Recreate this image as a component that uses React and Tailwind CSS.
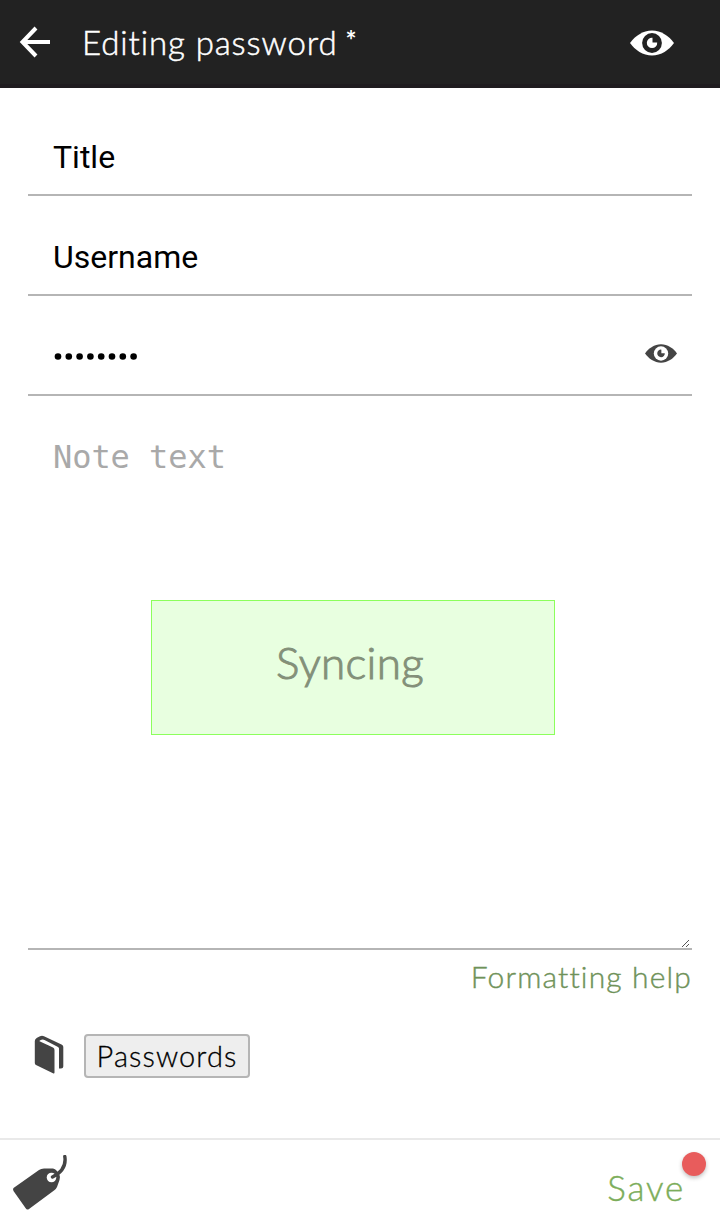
function EyeIcon({ className, hole }) {
  return (
    <svg viewBox="0 0 44 26" className={className} preserveAspectRatio="none">
      <path fill="currentColor" d="M0 13C5 6 13 .5 22 .5S39 6 44 13C39 20 31 25.500 22 25.500S5 20 0 13Z" />
      <circle cx="22" cy="13" r="9.900" fill={hole} />
      <path fill="currentColor" d="M22.500 7.700A5.200 5.200 0 1 0 27.200 12.500L22.500 12.500Z" />
    </svg>
  );
}

function Field({ children }) {
  return (
    <div className="flex h-[86px] items-center border-b-2 border-[#b5b5b5] px-[25px] pt-[10px] font-['Roboto',sans-serif] text-[32px] leading-[40px] font-normal text-black">
      {children}
    </div>
  );
}

export default function App() {
  return (
    <div className="flex h-[1232px] w-[720px] flex-col overflow-hidden bg-white font-['Lato',sans-serif] font-light">
      <header className="flex h-[88px] shrink-0 items-center border-b-4 border-[#1f1c1f] bg-[#222] text-white">
        <svg viewBox="0 0 32 32" className="ml-[19px] h-[32px] w-[32px]" fill="none" stroke="white" strokeWidth="4">
          <path d="M17 2 3.500 16 17 30M3 16H31" />
        </svg>
        <h1 className="ml-[31px] flex text-[33px] leading-[40px] tracking-[0.900px] [-webkit-text-stroke:0.500px_currentColor]">
          Editing password
          <span className="ml-[8px] text-[26px] leading-[37px] font-bold tracking-normal [-webkit-text-stroke:0px]">*</span>
        </h1>
        <EyeIcon className="mt-px mr-[46px] ml-auto h-[26px] w-[44px]" hole="#222" />
      </header>

      <main className="px-[28px] pt-[22px]">
        <div className="flex flex-col gap-[14px]">
          <Field>Title</Field>
          <Field>Username</Field>
          <Field>
            <svg viewBox="0 0 90 8" className="ml-px h-[8px] w-[90px]">
              {Array.from({ length: 8 }, (_, i) => (
                <circle key={i} cx={4 + i * 10.8} cy="3.500" r="3.300" />
              ))}
            </svg>
            <EyeIcon className="mr-[-10px] mb-[8px] ml-auto h-[19px] w-[32px] text-[#444]" hole="#fff" />
          </Field>
        </div>

        <div className="relative h-[554px] border-b-2 border-[#b5b5b5] px-[25px] pt-[41px]">
          <div className="font-['DejaVu_Sans_Mono',monospace] text-[32px] leading-[40px] font-normal tracking-[-0.060px] text-[#a9a9a9]">
            Note text
          </div>
          <div className="absolute top-[204px] left-[123px] flex h-[135px] w-[404px] justify-center border border-[#8cff5c] bg-[#e8ffe0] pt-[33px] pr-[6px] text-[44px] leading-[56px] tracking-[0.300px] text-[#839079] [-webkit-text-stroke:1px_currentColor]">
            Syncing
          </div>
          <svg viewBox="0 0 9 9" className="absolute right-[2px] bottom-0 h-[9px] w-[9px]" stroke="#555" strokeWidth="1">
            <path d="M1 8 8 1M5 8 8 5" />
          </svg>
        </div>

        <div className="flex h-[56px] items-center justify-end pb-[3px] text-[30px] tracking-[1.150px] text-[#6f9259] [-webkit-text-stroke:0.400px_currentColor]">
          Formatting help
        </div>

        <div className="mt-[28px] flex h-[44px] items-center">
          <svg viewBox="0 0 30 40" className="mb-[3px] ml-[6px] h-[40px] w-[30px]">
            <path
              fill="#444"
              d="M.8 6Q.8 4 3 2.800L6 1.200Q8 .3 10 1.200L28 9.700Q29.300 10.500 29.300 12V31.500Q29.300 33.500 27 33.500H25V13.500Q25 12.500 24 12L10.500 5Q9 4.200 7.500 4.800Q5 5.500 5.500 6.300L19 12.500Q20.500 13.300 20.500 15V37.500Q20.500 39 19 38.300L2 30Q.8 29.300 .8 28Z"
            />
          </svg>
          <div className="ml-[20px] flex h-[44px] w-[166px] items-center justify-center rounded-[4px] border-2 border-[#b5b5b5] bg-[#eee] pb-px text-[29px] tracking-[1.100px] text-black [-webkit-text-stroke:0.300px_currentColor]">
            Passwords
          </div>
        </div>
      </main>

      <footer className="mt-auto flex h-[94px] shrink-0 items-center border-t-2 border-[#e9e9e9]">
        <svg viewBox="0 0 58 60" className="mb-[2px] ml-[11px] h-[60px] w-[58px]">
          <path
            fill="#444"
            d="M2.500 33 28 15Q30 13.500 33 13.500H42Q44 13.500 46 16L48.500 20Q49.500 22 48.500 25L46 32Q45 34 43 35.500L18 54Q16 55.500 14.500 53L2.500 36Q1.500 34 2.500 33Z"
          />
          <circle cx="40.500" cy="22.500" r="4.800" fill="white" />
          <path fill="none" stroke="#444" strokeWidth="3.400" strokeLinecap="round" d="M41.500 22Q56 15 53.800 1.500" />
        </svg>
        <div className="relative mt-[1px] mr-[35px] ml-auto text-[35px] leading-[44px] tracking-[1.800px] text-[#7cad5a] [-webkit-text-stroke:0.400px_currentColor]">
          Save
          <span className="absolute top-[-13px] right-[-21px] h-[24px] w-[24px] rounded-full bg-[#e85c5c] shadow-[0_2px_4px_rgba(0,0,0,0.25)]" />
        </div>
      </footer>
    </div>
  );
}
